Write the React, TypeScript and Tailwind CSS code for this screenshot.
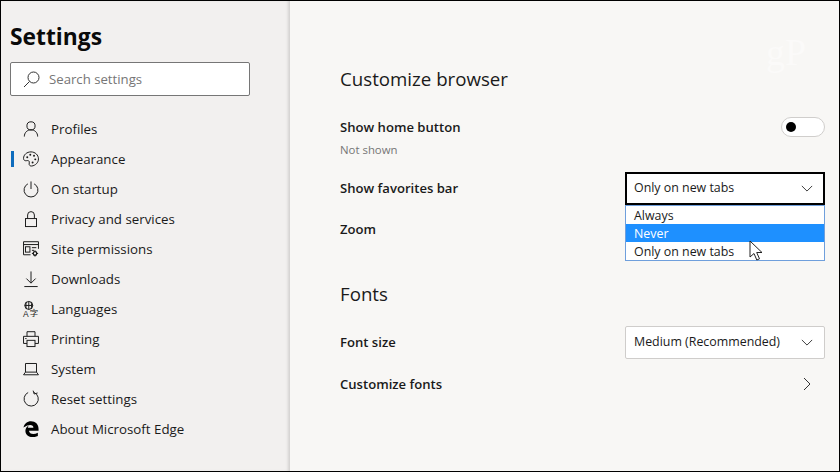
import React from "react";

const FONT = "font-['Open_Sans','Noto_Sans',sans-serif]";

/* ================= ICONS ================= */
function Icon({ children }: { children: React.ReactNode }) {
  return (
    <svg width="16" height="16" viewBox="0 0 18 18" fill="none" stroke="#1a1a1a" strokeWidth="1.1" className="shrink-0 overflow-visible">
      {children}
    </svg>
  );
}

const ICONS: Record<string, React.ReactNode> = {
  profile: (
    <Icon>
      <circle cx="9" cy="5.5" r="4.6" />
      <path d="M1.500 17.500c0-4.400 3.200-7.600 7.500-7.600s7.500 3.200 7.500 7.600" />
    </Icon>
  ),
  palette: (
    <Icon>
      <path d="M9 1C4.200 1 .6 4.300.6 8.300c0 2.100 1.600 2.900 3.100 2.600 1.500-.3 2.800-.2 3.300.9.500 1.100-.3 2-.1 3.200.2 1.300 1.400 2.100 2.900 1.900 4.200-.5 7.600-3.800 7.600-8C17.400 4.600 13.700 1 9 1z" />
      <circle cx="4.800" cy="7" r="1.100" fill="#1a1a1a" stroke="none" />
      <circle cx="8.200" cy="4.300" r="1.100" fill="#1a1a1a" stroke="none" />
      <circle cx="12.400" cy="5.400" r="1.100" fill="#1a1a1a" stroke="none" />
      <circle cx="13.800" cy="9.400" r="1.100" fill="#1a1a1a" stroke="none" />
      <circle cx="10.800" cy="13" r="1.100" fill="#1a1a1a" stroke="none" />
    </Icon>
  ),
  power: (
    <Icon>
      <path d="M9 .5v8.500" />
      <path d="M5.500 3.200a7.800 7.800 0 1 0 7 0" />
    </Icon>
  ),
  lock: (
    <Icon>
      <rect x="2.800" y="8.500" width="12.400" height="9" />
      <path d="M5.200 8.500V4.500a3.800 3.800 0 0 1 7.600 0v4" />
    </Icon>
  ),
  site: (
    <Icon>
      <path d="M8.500 15.500H.6V.8h16.800v8" />
      <path d="M.6 4h16.800" />
      <rect x="2.800" y="6.500" width="5" height="6" />
      <path d="M10 7.500h5M10 10.500h2.500" />
      <circle cx="13.500" cy="14" r="2" strokeWidth="1.500" />
      <path d="M13.500 10.500v1.500M13.500 16v1.500M10 14h1.500M15.500 14h1.500" />
    </Icon>
  ),
  download: (
    <Icon>
      <path d="M9 .5v13" />
      <path d="M3.800 8.500L9 13.700l5.200-5.200" />
      <path d="M1.500 17.500h15" />
    </Icon>
  ),
  languages: (
    <Icon>
      <circle cx="6.500" cy="5" r="4.500" />
      <path d="M2 5h9M6.500.5v9M4 1.200c-1 2.500-1 5.100 0 7.600M9 1.200c1 2.500 1 5.100 0 7.600" />
      <text x="0" y="17.500" fontSize="9.500" fill="#1a1a1a" stroke="none" fontFamily="'Liberation Sans',sans-serif">A</text>
      <text x="7.500" y="17" fontSize="9.500" fill="#1a1a1a" stroke="none" fontFamily="'Noto Sans CJK SC',sans-serif">字</text>
    </Icon>
  ),
  print: (
    <Icon>
      <path d="M4.500 6V.8h9V6" />
      <path d="M4.500 14H.6V6h16.800v8h-3.900" />
      <rect x="4.500" y="10.500" width="9" height="7" />
      <path d="M2.500 8.500h1.500" />
    </Icon>
  ),
  laptop: (
    <Icon>
      <path d="M2.800 12.500V2.800h12.400v9.700" />
      <path d="M.6 15.500h16.800l-2.200-3H2.800z" />
    </Icon>
  ),
  reset: (
    <Icon>
      <path d="M5.800 1.700a8 8 0 1 0 6.600-.1" />
      <path d="M11.400-.4l1.200 3.800 3.800-1.200" />
    </Icon>
  ),
  edge: (
    <svg width="16" height="16" viewBox="0 0 18 18" className="shrink-0">
      <path
        fill="#000"
        d="M.4 7.800C1.300 3 4.800.3 9 .3c5 0 8.500 3.300 8.500 8.700v1.900H6.700c.2 3.600 5.200 4.900 10 2.300v3.700c-5.600 2.700-13.800 1.300-14-5.600-.1-2.700 1.300-4.800 3.800-6.200-.5.700-1 1.500-1.100 2.600h6.300c.2-3.300-4.100-4.900-11.300-.3z"
      />
    </svg>
  ),
};

const NAV = [
  { label: "Profiles", icon: "profile" },
  { label: "Appearance", icon: "palette", active: true },
  { label: "On startup", icon: "power" },
  { label: "Privacy and services", icon: "lock" },
  { label: "Site permissions", icon: "site" },
  { label: "Downloads", icon: "download" },
  { label: "Languages", icon: "languages" },
  { label: "Printing", icon: "print" },
  { label: "System", icon: "laptop" },
  { label: "Reset settings", icon: "reset" },
  { label: "About Microsoft Edge", icon: "edge" },
];

function Chevron() {
  return (
    <svg width="12" height="7" viewBox="0 0 14 8" fill="none" stroke="#333" strokeWidth="1.100">
      <path d="M1 1l6 6 6-6" />
    </svg>
  );
}

/* ================= SIDEBAR ================= */
function Sidebar() {
  return (
    <aside className="w-[289px] shrink-0 bg-[#f2f0ef] shadow-[inset_-3px_0_3px_-1px_rgba(0,0,0,0.13)] pl-[9px] pt-[19px]">
      <h1 className="text-[22.800px] leading-[34px] font-bold text-[#0a0a0a]">Settings</h1>
      <div className="mt-[8px] w-[240px] h-[34px] bg-white border border-[#767676] rounded-[2px] flex items-center pl-[12px] gap-[9px]">
        <svg width="17" height="17" viewBox="0 0 17 17" fill="none" stroke="#333" strokeWidth="1">
          <circle cx="10.500" cy="6.500" r="5.500" />
          <path d="M6.500 10.500L1 16" />
        </svg>
        <span className="text-[13.200px] pt-[1px] text-[#767676]">Search settings</span>
      </div>
      <nav className="mt-[18px] flex flex-col">
        {NAV.map(n => (
          <div key={n.label} className="relative h-[30px] flex items-center pl-[13px] gap-[12px]">
            {n.active && <span className="absolute left-[1px] top-[7px] w-[3px] h-[16px] bg-[#0f6cbd]" />}
            {ICONS[n.icon]}
            <span className="text-[13.300px] pt-[1px] text-[#1a1a1a]">{n.label}</span>
          </div>
        ))}
      </nav>
    </aside>
  );
}

/* ================= MAIN ================= */
function Row({ label, className, children }: { label: string; className: string; children?: React.ReactNode }) {
  return (
    <div className={`flex items-center justify-between ${className}`}>
      <span className="text-[13.100px] pt-[1px] font-semibold text-[#1a1a1a]">{label}</span>
      {children}
    </div>
  );
}

function Main() {
  return (
    <main className="relative flex-1 bg-[#f8f7f5] pl-[50px] pr-[14px] pt-[63px]">
      <span className="absolute left-[476px] top-[29px] text-[38px] leading-[44px] text-[#fbfaf9] font-['Liberation_Serif',serif]">gP</span>

      <h2 className="text-[18.700px] leading-[30px] text-[#1a1a1a]">Customize browser</h2>

      <Row label="Show home button" className="h-[24px] mt-[21px]">
        <div className="w-[44px] h-[20px] rounded-full border border-[#d0cecc] bg-white flex items-center pl-[4px]">
          <span className="w-[10px] h-[10px] rounded-full bg-black" />
        </div>
      </Row>
      <p className="text-[11.400px] leading-[18px] mt-[2px] text-[#767676]">Not shown</p>

      <Row label="Show favorites bar" className="h-[33px] mt-[13px]">
        <div className="relative w-[200px] h-[33px] bg-white border-2 border-black flex items-center justify-between pl-[7px] pr-[10px]">
          <span className="text-[12.400px] text-[#1a1a1a]">Only on new tabs</span>
          <Chevron />
          <div className="absolute z-10 left-[-2px] top-[31px] w-[200px] bg-white border border-[#6f9fdc] text-[12.400px]">
            <div className="h-[18px] leading-[20px] pl-[8px] text-[#1a1a1a]">Always</div>
            <div className="h-[18px] leading-[20px] pl-[8px] bg-[#1e90ff] text-white">Never</div>
            <div className="h-[18px] leading-[20px] pl-[8px] text-[#1a1a1a]">Only on new tabs</div>
            <svg width="15" height="22" viewBox="0 0 15 22" className="absolute left-[123px] top-[34px]" fill="#fff" stroke="#222" strokeWidth="1">
              <path d="M1 1v16l4-3.500 2.800 6.500 2.700-1.200-2.800-6.300h5.300z" />
            </svg>
          </div>
        </div>
      </Row>

      <Row label="Zoom" className="h-[24px] mt-[12px]" />

      <h2 className="text-[18.700px] leading-[30px] mt-[38px] text-[#1a1a1a]">Fonts</h2>

      <Row label="Font size" className="h-[33px] mt-[17px]">
        <div className="w-[200px] h-[33px] bg-white border border-[#cfcdcb] rounded-[2px] flex items-center justify-between pl-[8px] pr-[11px]">
          <span className="text-[12.400px] text-[#1a1a1a]">Medium (Recommended)</span>
          <Chevron />
        </div>
      </Row>

      <Row label="Customize fonts" className="h-[24px] mt-[13px]">
        <svg width="8" height="14" viewBox="0 0 8 14" fill="none" stroke="#333" strokeWidth="1" className="mr-[14px]">
          <path d="M1 1l6 6-6 6" />
        </svg>
      </Row>
    </main>
  );
}

export default function App() {
  return (
    <div className={`w-[840px] h-[472px] overflow-hidden border border-black flex ${FONT}`}>
      <Sidebar />
      <Main />
    </div>
  );
}
